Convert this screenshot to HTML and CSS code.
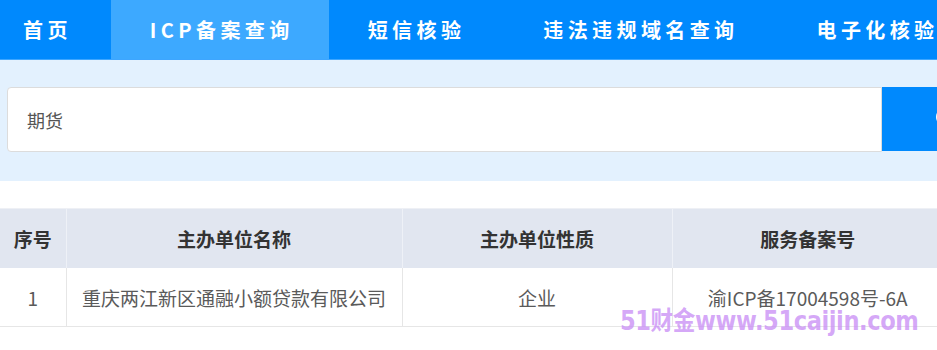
FILE: index.html
```html
<!DOCTYPE html>
<html lang="zh-CN">
<head>
<meta charset="utf-8">
<title>ICP备案查询</title>
<link rel="stylesheet" href="styles.css">
</head>
<body>
<div class="page">
  <nav class="nav">
    <a class="nav-item first">首页</a>
    <a class="nav-item active">ICP备案查询</a>
    <a class="nav-item">短信核验</a>
    <a class="nav-item">违法违规域名查询</a>
    <a class="nav-item">电子化核验</a>
  </nav>
  <section class="search-area">
    <div class="search-row">
      <div class="search-input">期货</div>
      <button class="search-btn" type="button">
        <svg width="24" height="24" viewBox="0 0 24 24"><circle cx="10" cy="10" r="7.5" fill="none" stroke="#fff" stroke-width="3"/><path d="M15.5 15.5 L22 22" stroke="#fff" stroke-width="3" stroke-linecap="round"/></svg>
      </button>
    </div>
  </section>
  <table class="result">
    <colgroup>
      <col class="c1"><col class="c2"><col class="c3"><col class="c4">
    </colgroup>
    <thead>
      <tr><th>序号</th><th>主办单位名称</th><th>主办单位性质</th><th>服务备案号</th></tr>
    </thead>
    <tbody>
      <tr><td>1</td><td>重庆两江新区通融小额贷款有限公司</td><td>企业</td><td>渝ICP备17004598号-6A</td></tr>
    </tbody>
  </table>
  <div class="watermark">51财金www.51caijin.com</div>
</div>
</body>
</html>
```

FILE: styles.css
```css
html, body {
  margin: 0;
  padding: 0;
  background: #fff;
  overflow: hidden;
}
.page {
  position: relative;
  width: 937px;
  height: 350px;
  overflow: hidden;
  font-family: "Microsoft YaHei", "Noto Sans CJK SC", "Noto Sans", sans-serif;
}
.nav {
  display: flex;
  height: 59px;
  background: #0089fd;
  border-bottom: 1px solid #3ea6ff;
  white-space: nowrap;
}
.nav-item {
  display: flex;
  align-items: center;
  flex: none;
  padding: 0 39px;
  color: #fff;
  font-size: 20px;
  font-weight: 700;
  letter-spacing: 4.4px;
  line-height: 1;
}
.nav-item.first {
  padding-left: 23px;
}
.nav-item.active {
  background: #3da9ff;
  padding-right: 35px;
}
.search-area {
  background: #e3f1fe;
  height: 121px;
  padding: 27px 0 0 7px;
  box-sizing: border-box;
}
.search-row {
  display: flex;
  width: 1000px;
  height: 65px;
}
.search-input {
  box-sizing: border-box;
  width: 875px;
  height: 65px;
  background: #fff;
  border: 1px solid #dcdcdc;
  border-radius: 4px 0 0 4px;
  padding-left: 19px;
  display: flex;
  align-items: center;
  font-size: 18px;
  color: #555;
}
.search-btn {
  width: 120px;
  height: 64px;
  border: none;
  background: #0089fd;
  padding: 0 0 0 53px;
  display: flex;
  align-items: center;
}
.result {
  margin-top: 27px;
  width: 943px;
  border-collapse: collapse;
  table-layout: fixed;
  font-size: 19px;
}
.c1 { width: 66px; }
.c2 { width: 336px; }
.c3 { width: 270px; }
.c4 { width: 271px; }
.result th {
  height: 59px;
  background: #e1e6f0;
  color: #333;
  font-weight: 700;
  text-align: center;
  border-top: 1px solid #eef0f5;
  border-left: 1px solid #eef1f7;
  padding: 0;
}
.result th:first-child,
.result td:first-child {
  border-left: none;
}
.result td {
  height: 58px;
  color: #5a5a5a;
  text-align: center;
  border-left: 1px solid #e6e6e6;
  border-bottom: 1px solid #e6e6e6;
  padding: 0;
}
.watermark {
  position: absolute;
  left: 620px;
  top: 304px;
  font-family: "DejaVu Sans", "Noto Sans CJK SC", sans-serif;
  font-weight: 700;
  font-size: 26px;
  line-height: 34px;
  color: rgba(200, 140, 245, 0.75);
  letter-spacing: -0.5px;
  white-space: nowrap;
  transform: scaleX(0.87);
  transform-origin: left center;
}
```
